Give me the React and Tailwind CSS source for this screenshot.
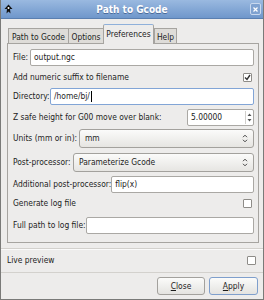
import { useState } from 'react';

const font = { fontFamily: '"DejaVu Sans Condensed", "Liberation Sans", sans-serif' };

const Entry = ({ value, width, focused }) => (
  <div
    className={`h-[17px] ${width} shrink-0 bg-white rounded-[2px] border flex items-center pl-[3px] text-[#222] ${
      focused ? 'border-[#82a5d6]' : 'border-[#aaa8a4]'
    }`}
  >
    {value}
    {focused && <span className="w-px h-[11px] bg-black ml-px" />}
  </div>
);

const Check = ({ checked }) => (
  <div className="w-[9px] h-[9px] bg-white border border-[#8e8c88] rounded-[1px] flex items-center justify-center">
    {checked && (
      <svg width="7" height="7" viewBox="0 0 7 7">
        <path d="M1 3.5 L3 5.5 L6 1" fill="none" stroke="#333" strokeWidth="1.4" />
      </svg>
    )}
  </div>
);

const UpDown = () => (
  <svg width="6" height="9" viewBox="0 0 6 9">
    <path d="M1 3.2 L3 1.2 L5 3.2 M1 5.8 L3 7.8 L5 5.8" fill="none" stroke="#444" strokeWidth="1" />
  </svg>
);

const Combo = ({ value, width }) => (
  <div
    className={`h-[19px] ${width} shrink-0 rounded-[3px] border border-[#a3a19d] bg-gradient-to-b from-[#fbfbfa] to-[#e6e5e2] flex items-center justify-between pl-[5px] pr-[5px] text-[#222]`}
  >
    <span>{value}</span>
    <UpDown />
  </div>
);

const Row = ({ h, label, children }) => (
  <div className={`${h} flex items-center justify-between pl-[5px] pr-[4px]`}>
    <span className="whitespace-nowrap">{label}</span>
    {children}
  </div>
);

const tabs = ['Path to Gcode', 'Options', 'Preferences', 'Help'];
const tabWidths = ['w-[60px]', 'w-[35px]', 'w-[51px]', 'w-[23px]'];

export default function App() {
  const [active] = useState(2);

  return (
    <div
      className="w-[264px] h-[300px] bg-[#edeceb] flex flex-col border-x border-b border-[#7a7a78] text-[8.4px] text-[#1c1c1c] overflow-hidden"
      style={font}
    >
      {/* Title bar */}
      <div className="h-[19px] shrink-0 relative flex items-center justify-center bg-gradient-to-b from-[#9ab9e0] to-[#6f97cb] border-b border-[#5a7fb0]">
        <svg className="absolute left-[3px] top-[4px]" width="9" height="10" viewBox="0 0 9 10">
          <path d="M4.5 0.5 L8.5 5 L6 5 L6.5 9.5 L4.5 7.5 L2.5 9.5 L3 5 L0.5 5 Z" fill="#111" />
          <circle cx="4.5" cy="4" r="1" fill="#fff" />
        </svg>
        <span className="font-bold text-white text-[10px] [text-shadow:0_1px_0_#4a6b99]">Path to Gcode</span>
        <div className="absolute right-[2px] top-[3px] w-[11px] h-[12px] rounded-[2px] border border-[#c8d8ee] bg-[#7fa2d0] flex items-center justify-center">
          <svg width="5" height="5" viewBox="0 0 5 5">
            <path d="M0.5 0.5 L4.5 4.5 M4.5 0.5 L0.5 4.5" stroke="#fff" strokeWidth="1.2" />
          </svg>
        </div>
      </div>

      {/* Tabs */}
      <div className="h-[24px] shrink-0 flex items-end pl-[7px]">
        {tabs.map((t, i) =>
          i === active ? (
            <div
              key={t}
              className={`${tabWidths[i]} h-[20px] -mb-px relative z-10 bg-[#edeceb] border-x border-t border-[#a6a4a0] border-t-[#8fb0da] rounded-t-[2px] flex items-start justify-center pt-[3px] whitespace-nowrap`}
            >
              {t}
            </div>
          ) : (
            <div
              key={t}
              className={`${tabWidths[i]} h-[15px] bg-[#dedcd8] border-l border-t border-[#a6a4a0] ${
                i === tabs.length - 1 ? 'border-r' : ''
              } flex items-start justify-center pt-[2px] whitespace-nowrap`}
            >
              {t}
            </div>
          )
        )}
      </div>

      {/* Panel */}
      <div className="ml-[6px] w-[252px] h-[200px] shrink-0 border border-[#a6a4a0] flex flex-col pt-[4px]">
        <Row h="h-[19px]" label="File:">
          <Entry value="output.ngc" width="w-[224px]" />
        </Row>
        <Row h="h-[20px]" label="Add numeric suffix to filename">
          <div className="mr-[2px]">
            <Check checked />
          </div>
        </Row>
        <Row h="h-[19px]" label="Directory:">
          <Entry value="/home/bj/" width="w-[204px]" focused />
        </Row>
        <Row h="h-[22px]" label="Z safe height for G00 move over blank:">
          <div className="h-[17px] w-[67px] shrink-0 bg-white rounded-[2px] border border-[#aaa8a4] flex items-center justify-between pl-[3px] pr-[1px]">
            <span>5.00000</span>
            <div className="flex flex-col h-[13px] w-[7px] border-l border-[#d0cecb] items-center justify-center">
              <svg width="5" height="11" viewBox="0 0 5 11">
                <path d="M0.5 4 L2.5 1.5 L4.5 4 Z M0.5 7 L2.5 9.5 L4.5 7 Z" fill="#555" />
              </svg>
            </div>
          </div>
        </Row>
        <Row h="h-[21px]" label="Units (mm or in):">
          <Combo value="mm" width="w-[175px]" />
        </Row>
        <Row h="h-[26px]" label="Post-processor:">
          <Combo value="Parameterize Gcode" width="w-[181px]" />
        </Row>
        <Row h="h-[18px]" label="Additional post-processor:">
          <Entry value="flip(x)" width="w-[143px]" />
        </Row>
        <Row h="h-[20px]" label="Generate log file">
          <div className="mr-[2px]">
            <Check />
          </div>
        </Row>
        <Row h="h-[24px]" label="Full path to log file:">
          <Entry value="" width="w-[168px]" />
        </Row>
      </div>

      {/* Bottom */}
      <div className="mt-[5px] border-t border-[#d3d1cd] shadow-[0_1px_0_#fafafa]" />
      <div className="h-[23px] flex items-center justify-between pl-[6px] pr-[7px]">
        <span>Live preview</span>
        <Check />
      </div>
      <div className="border-t border-[#d3d1cd]" />
      <div className="flex justify-end gap-[4px] pr-[5px] pt-[4px]">
        <div className="w-[48px] h-[18px] rounded-[3px] border border-[#a3a19d] bg-gradient-to-b from-[#fbfbfa] to-[#e4e3e0] flex items-center justify-center">
          <span>
            <span className="underline">C</span>lose
          </span>
        </div>
        <div className="w-[49px] h-[18px] rounded-[3px] border border-[#7f9fcc] bg-gradient-to-b from-[#fbfbfa] to-[#e4e3e0] flex items-center justify-center">
          <span>
            <span className="underline">A</span>pply
          </span>
        </div>
      </div>
    </div>
  );
}
